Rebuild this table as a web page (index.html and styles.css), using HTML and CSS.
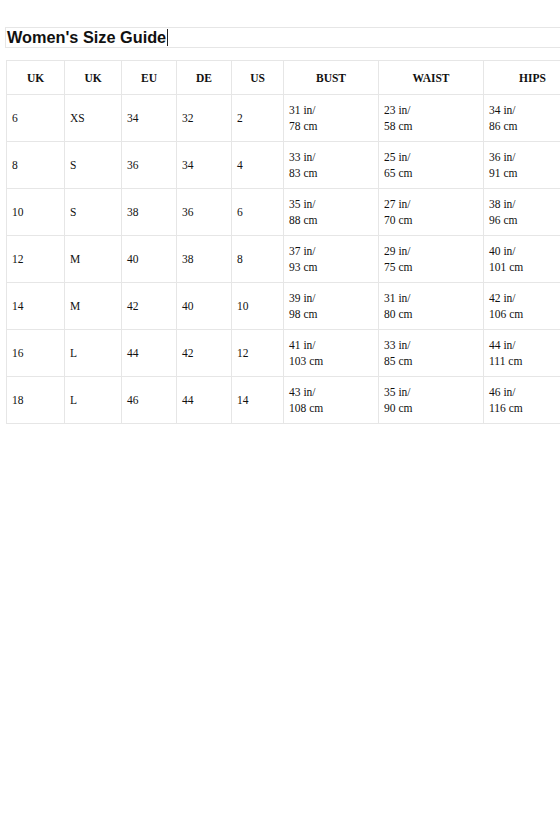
FILE: index.html
```html
<!DOCTYPE html>
<html lang="en">
<head>
<meta charset="utf-8">
<title>Women's Size Guide</title>
<link rel="stylesheet" href="styles.css">
</head>
<body>
<div class="page">
  <div class="title-box"><h1 class="title">Women's Size Guide<span class="caret"></span></h1></div>
  <table class="sizes">
    <colgroup>
      <col class="c1"><col class="c2"><col class="c3"><col class="c4"><col class="c5"><col class="c6"><col class="c7"><col class="c8">
    </colgroup>
    <thead>
      <tr><th>UK</th><th>UK</th><th>EU</th><th>DE</th><th>US</th><th>BUST</th><th>WAIST</th><th>HIPS</th></tr>
    </thead>
    <tbody>
      <tr><td>6</td><td>XS</td><td>34</td><td>32</td><td>2</td><td>31 in/<br>78 cm</td><td>23 in/<br>58 cm</td><td>34 in/<br>86 cm</td></tr>
      <tr><td>8</td><td>S</td><td>36</td><td>34</td><td>4</td><td>33 in/<br>83 cm</td><td>25 in/<br>65 cm</td><td>36 in/<br>91 cm</td></tr>
      <tr><td>10</td><td>S</td><td>38</td><td>36</td><td>6</td><td>35 in/<br>88 cm</td><td>27 in/<br>70 cm</td><td>38 in/<br>96 cm</td></tr>
      <tr><td>12</td><td>M</td><td>40</td><td>38</td><td>8</td><td>37 in/<br>93 cm</td><td>29 in/<br>75 cm</td><td>40 in/<br>101 cm</td></tr>
      <tr><td>14</td><td>M</td><td>42</td><td>40</td><td>10</td><td>39 in/<br>98 cm</td><td>31 in/<br>80 cm</td><td>42 in/<br>106 cm</td></tr>
      <tr><td>16</td><td>L</td><td>44</td><td>42</td><td>12</td><td>41 in/<br>103 cm</td><td>33 in/<br>85 cm</td><td>44 in/<br>111 cm</td></tr>
      <tr><td>18</td><td>L</td><td>46</td><td>44</td><td>14</td><td>43 in/<br>108 cm</td><td>35 in/<br>90 cm</td><td>46 in/<br>116 cm</td></tr>
    </tbody>
  </table>
</div>
</body>
</html>
```
FILE: styles.css
```css
html, body {
  margin: 0;
  padding: 0;
  background: #fff;
  overflow: hidden;
}
.page {
  width: 620px;
  padding-top: 27px;
}
.title-box {
  margin-left: 5px;
  width: 600px;
  height: 19px;
  border: 1px solid #e6e6e6;
  display: flex;
  align-items: center;
}
.title {
  margin: 0;
  padding-left: 1px;
  font-family: "Liberation Sans", Arial, sans-serif;
  font-weight: bold;
  font-size: 16.3px;
  line-height: 19px;
  color: #111;
  display: flex;
  align-items: center;
}
.caret {
  display: inline-block;
  width: 1px;
  height: 17px;
  background: #222;
  margin-left: 1px;
}
.sizes {
  margin-top: 12px;
  margin-left: 6px;
  border-collapse: collapse;
  table-layout: fixed;
  width: 575px;
  font-family: "Liberation Serif", "Times New Roman", serif;
  font-size: 11.5px;
  color: #111;
}
.c1 { width: 58px; }
.c2 { width: 57px; }
.c3 { width: 55px; }
.c4 { width: 55px; }
.c5 { width: 52px; }
.c6 { width: 95px; }
.c7 { width: 105px; }
.c8 { width: 98px; }
.sizes th, .sizes td {
  border: 1px solid #e6e6e6;
  padding: 0 5px;
}
.sizes th {
  height: 33px;
  font-weight: bold;
  text-align: center;
}
.sizes td {
  height: 46px;
  text-align: left;
  vertical-align: middle;
  line-height: 16px;
}
```
